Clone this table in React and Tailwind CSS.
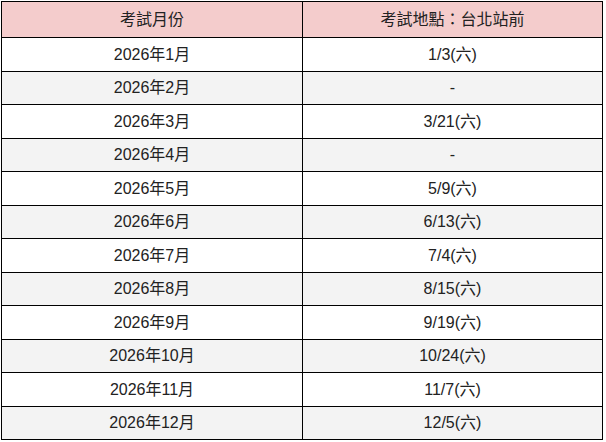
import React from "react";

const rows = [
  ["2026年1月", "1/3(六)"],
  ["2026年2月", "-"],
  ["2026年3月", "3/21(六)"],
  ["2026年4月", "-"],
  ["2026年5月", "5/9(六)"],
  ["2026年6月", "6/13(六)"],
  ["2026年7月", "7/4(六)"],
  ["2026年8月", "8/15(六)"],
  ["2026年9月", "9/19(六)"],
  ["2026年10月", "10/24(六)"],
  ["2026年11月", "11/7(六)"],
  ["2026年12月", "12/5(六)"],
];

export default function App() {
  return (
    <div
      className="w-[606px] h-[442px] bg-white pt-px pl-px"
      style={{}}
    >
      <div
        className="w-[602px] border border-black text-[16px] text-[#222]"
        style={{ fontFamily: '"Liberation Sans", "Noto Sans CJK TC", sans-serif' }}
      >
        <div className="grid grid-cols-[300px_1fr] h-[35px] bg-[#f4cccc]">
          <div className="flex items-center justify-center">考試月份</div>
          <div className="flex items-center justify-center border-l border-black">考試地點：台北站前</div>
        </div>
        {rows.map((r, i) => (
          <div
            key={i}
            className={
              "grid grid-cols-[300px_1fr] border-t border-black " +
              (i % 2 === 0 ? "h-[34px] bg-white" : "h-[33px] bg-[#f3f3f3]")
            }
          >
            <div className="flex items-center justify-center">{r[0]}</div>
            <div className="flex items-center justify-center border-l border-black">{r[1]}</div>
          </div>
        ))}
      </div>
    </div>
  );
}
